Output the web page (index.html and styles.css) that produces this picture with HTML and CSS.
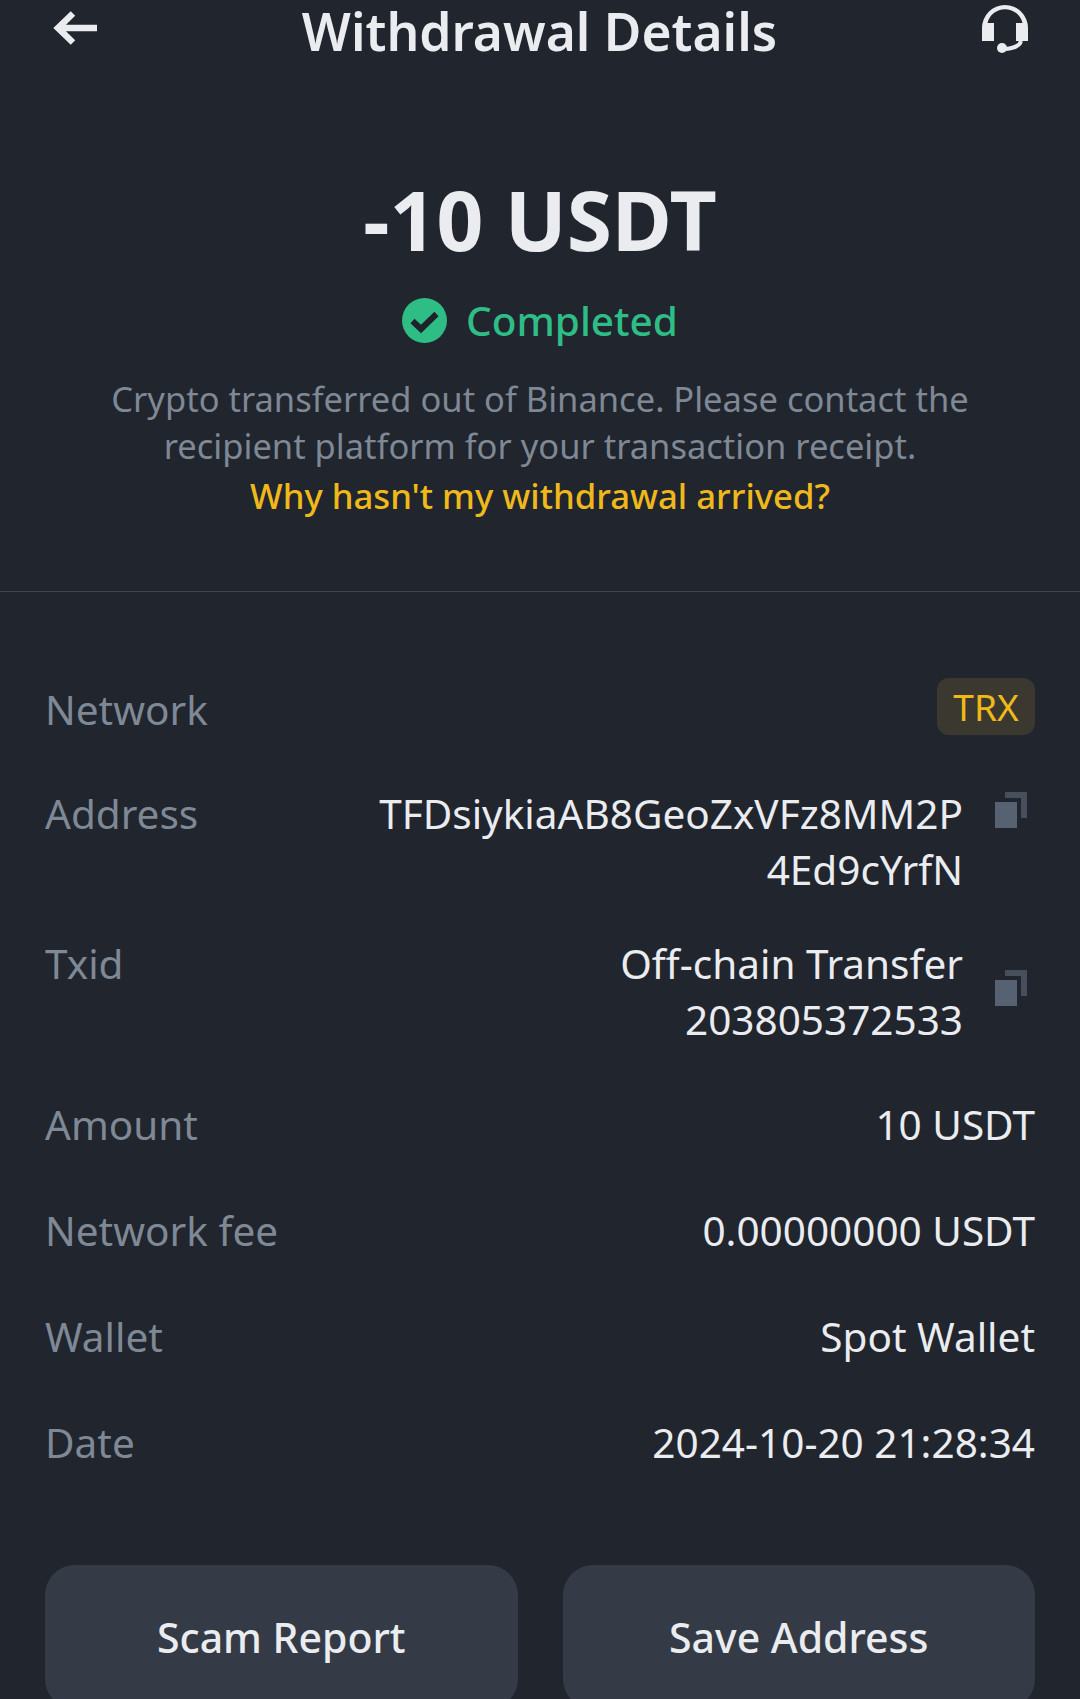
FILE: index.html
```html
<!DOCTYPE html>
<html lang="en">
<head>
<meta charset="utf-8">
<title>Withdrawal Details</title>
<link rel="stylesheet" href="styles.css">
</head>
<body>
<div class="page">
  <header class="topbar">
    <svg class="back" viewBox="0 0 44 34" width="44" height="34"><path d="M20 2.500 5 17l15 14.500M5 17h39" fill="none" stroke="#eaecef" stroke-width="6.500"/></svg>
    <h1 class="title">Withdrawal Details</h1>
    <svg class="headset" viewBox="0 0 46 48" width="46" height="48"><path d="M0 36V23a23 23 0 0 1 46 0v13H34V18h6.500a18 18 0 0 0-35 0H12v18z" fill="#eaecef"/><path d="M39 36c-1 4-6 7-15 8" fill="none" stroke="#eaecef" stroke-width="4"/><circle cx="20" cy="43" r="5" fill="#eaecef"/></svg>
  </header>

  <section class="summary">
    <div class="amount">-10 USDT</div>
    <div class="status">
      <svg viewBox="0 0 45 45" width="45" height="45"><circle cx="22.500" cy="22.500" r="22.500" fill="#2ebd85"/><path d="m10.500 23 8.500 8 15.500-15" fill="none" stroke="#1e2329" stroke-width="6"/></svg>
      <span>Completed</span>
    </div>
    <p class="note">Crypto transferred out of Binance. Please contact the<br>recipient platform for your transaction receipt.</p>
    <a class="link">Why hasn't my withdrawal arrived?</a>
  </section>

  <section class="details">
    <div class="row row-network"><span class="label">Network</span><span class="badge">TRX</span></div>
    <div class="row row-tall">
      <span class="label">Address</span>
      <div class="copy-value">
        <span class="value">TFDsiykiaAB8GeoZxVFz8MM2P<br>4Ed9cYrfN</span>
        <svg class="copy" viewBox="0 0 32 36" width="32" height="36"><path d="M10 0h22v26h-6V6H10z" fill="#474f5c"/><rect x="0" y="10" width="22" height="26" fill="#566171"/></svg>
      </div>
    </div>
    <div class="row row-tall row-txid">
      <span class="label">Txid</span>
      <div class="copy-value">
        <span class="value">Off-chain Transfer<br>203805372533</span>
        <svg class="copy" viewBox="0 0 32 36" width="32" height="36"><path d="M10 0h22v26h-6V6H10z" fill="#474f5c"/><rect x="0" y="10" width="22" height="26" fill="#566171"/></svg>
      </div>
    </div>
    <div class="row"><span class="label">Amount</span><span class="value">10 USDT</span></div>
    <div class="row"><span class="label">Network fee</span><span class="value">0.00000000 USDT</span></div>
    <div class="row"><span class="label">Wallet</span><span class="value">Spot Wallet</span></div>
    <div class="row"><span class="label">Date</span><span class="value">2024-10-20 21:28:34</span></div>
  </section>

  <footer class="actions">
    <button class="btn">Scam Report</button>
    <button class="btn">Save Address</button>
  </footer>
</div>
</body>
</html>
```
FILE: styles.css
```css
* { box-sizing: border-box; }
html, body { margin: 0; padding: 0; height: 100%; overflow: hidden; background: #20252e; }
.page {
  width: 1080px;
  height: 1699px;
  overflow: hidden;
  background: #20252e;
  color: #eaecef;
  font-family: "Noto Sans", "Liberation Sans", sans-serif;
}
.topbar {
  height: 64px;
  padding: 0 52px 0 53px;
  display: flex;
  align-items: center;
  justify-content: space-between;
}
.back { margin-top: -8px; }
.headset { margin-top: -6px; }
.title { margin: 0 0 2px; font-size: 51.500px; line-height: 60px; font-weight: 600; }
.summary { height: 528px; padding-top: 107px; text-align: center; border-bottom: 1px solid #3d444f; }
.amount { font-size: 82px; line-height: 96px; font-weight: 700; }
.status {
  margin-top: 22px;
  height: 62px;
  display: flex;
  align-items: center;
  justify-content: center;
  gap: 19px;
  color: #2ebd85;
  font-size: 40.500px;
  font-weight: 500;
}
.note { margin: 24px 0 0; font-size: 34.500px; line-height: 47px; color: #7f8895; }
.link { display: block; margin-top: 2px; font-size: 34.700px; line-height: 50px; font-weight: 500; color: #efb91c; }
.details { padding: 0 45px; margin-top: 85px; }
.row { display: flex; justify-content: space-between; align-items: center; height: 106px; font-size: 40.500px; }
.row-network { height: 65px; margin-bottom: 44px; }
.row-tall { align-items: flex-start; height: 150px; }
.row-txid { height: 136px; }
.label { color: #7f8895; line-height: 56px; }
.value { color: #eaecef; line-height: 56px; text-align: right; }
.badge {
  width: 98px;
  height: 57px;
  margin-bottom: 6px;
  border-radius: 12px;
  background: #3a382f;
  color: #efb91c;
  font-size: 37px;
  line-height: 57px;
  text-align: center;
}
.copy-value { display: flex; align-items: flex-start; gap: 32px; }
.copy { margin-top: 6px; margin-right: 8px; flex: none; }
.row-txid .copy { margin-top: 34px; }
.actions { display: flex; gap: 45px; padding: 0 45px; margin-top: 69px; }
.btn {
  flex: 1;
  height: 144px;
  border: 0;
  border-radius: 30px;
  background: #343b47;
  color: #eaecef;
  font-family: inherit;
  font-size: 41px;
  font-weight: 500;
}
```
